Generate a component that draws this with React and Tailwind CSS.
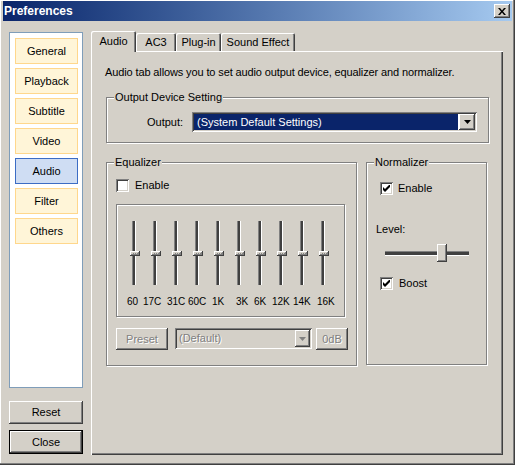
import React from "react";

const raised =
  "shadow-[inset_-1px_-1px_0_#404040,inset_1px_1px_0_#fff,inset_-2px_-2px_0_#808080,inset_2px_2px_0_#d4d0c8]";
const sunken =
  "shadow-[inset_1px_1px_0_#808080,inset_-1px_-1px_0_#fff,inset_2px_2px_0_#404040,inset_-2px_-2px_0_#d4d0c8]";
const etched = "border border-[#808080] shadow-[1px_1px_0_#fff,inset_1px_1px_0_#fff]";
const disabledText = "text-[#808080] [text-shadow:1px_1px_0_#fff]";

const Arrow = ({ color = "#000" }) => (
  <svg width="7" height="4" viewBox="0 0 7 4">
    <path d="M0 0h7L3.5 4z" fill={color} />
  </svg>
);

const Checkbox = ({ checked, label, gap }) => (
  <div className="flex items-center h-[13px]">
    <div className={`w-[13px] h-[13px] bg-white flex items-center justify-center ${sunken}`}>
      {checked && (
        <svg width="7" height="7" viewBox="0 0 7 7">
          <path d="M0 2v3l2 2 5-5V-1L2 4z" fill="#000" />
        </svg>
      )}
    </div>
    <span className={gap}>{label}</span>
  </div>
);

const GroupBox = ({ label, className, children }) => (
  <div className={`relative ${etched} ${className}`}>
    <span className="absolute left-[7px] -top-[7px] px-[1px] leading-[13px] bg-[#d4d0c8]">{label}</span>
    {children}
  </div>
);

const VSlider = () => (
  <div className="relative w-[21px] h-[64px]">
    <div className="w-[3px] h-full bg-[#404040] border-l border-[#808080] shadow-[1px_0_0_#fff]" />
    <div className={`absolute -left-[2px] top-[30px] w-[10px] h-[5px] bg-[#d4d0c8] ${raised} flex items-center justify-center`}>
      <div className="w-[5px] border-t border-dotted border-[#808080]" />
    </div>
  </div>
);

const navItems = ["General", "Playback", "Subtitle", "Video", "Audio", "Filter", "Others"];

export default function App() {
  return (
    <div
      className={`w-[515px] h-[465px] bg-[#d4d0c8] flex flex-col px-[3px] pt-[1px] text-[11px] text-black font-['Liberation_Sans',Arial,sans-serif] overflow-hidden shadow-[inset_-1px_-1px_0_#404040,inset_-2px_-2px_0_#808080,inset_1px_1px_0_#fff]`}
    >
      {/* title bar */}
      <div className="h-[20px] flex items-center justify-between pl-[1px] pr-[2px] bg-gradient-to-r from-[#0a246a] to-[#a6caf0]">
        <span className="text-white font-bold text-[12px]">Preferences</span>
        <div className={`w-[16px] h-[14px] bg-[#d4d0c8] flex items-center justify-center ${raised}`}>
          <svg width="8" height="7" viewBox="0 0 8 7">
            <path d="M0 0h2l2 2.5L6 0h2L5 3.5 8 7H6L4 4.5 2 7H0l3-3.5z" fill="#000" />
          </svg>
        </div>
      </div>

      <div className="flex pl-[6px] pt-[10px]">
        {/* left nav */}
        <div className="flex flex-col w-[74px] mt-[1px]">
          <div className="h-[356px] w-[74px] border border-[#7f9db9] bg-white pt-[5px] pl-[5px] flex flex-col gap-[4px]">
            {navItems.map((item) => (
              <div
                key={item}
                className={`w-[63px] h-[26px] flex items-center justify-center border ${
                  item === "Audio" ? "bg-[#cfddf3] border-[#3c6cc4]" : "bg-[#fff5d8] border-[#ffd78c]"
                }`}
              >
                {item}
              </div>
            ))}
          </div>
          <div className={`mt-[13px] h-[23px] flex items-center justify-center ${raised}`}>Reset</div>
          <div className="mt-[6px] h-[24px] border border-black">
            <div className={`h-full flex items-center justify-center ${raised}`}>Close</div>
          </div>
        </div>

        {/* tab control */}
        <div className="ml-[8px] w-[412px] flex flex-col">
          <div className="h-[20px] flex items-end">
            <div className="relative z-10 -mb-[1px] w-[45px] h-[21px] bg-[#d4d0c8] flex items-center justify-center pb-[1px] rounded-t-[2px] shadow-[inset_1px_1px_0_#fff,inset_-1px_0_0_#404040,inset_-2px_0_0_#808080]">
              Audio
            </div>
            <div className="w-[40px] h-[18px] flex items-center justify-center rounded-t-[2px] shadow-[inset_1px_1px_0_#fff,inset_-1px_0_0_#404040,inset_-2px_0_0_#808080]">
              AC3
            </div>
            <div className="w-[45px] h-[18px] flex items-center justify-center rounded-t-[2px] shadow-[inset_1px_1px_0_#fff,inset_-1px_0_0_#404040,inset_-2px_0_0_#808080]">
              Plug-in
            </div>
            <div className="w-[74px] h-[18px] flex items-center justify-center rounded-t-[2px] shadow-[inset_1px_1px_0_#fff,inset_-1px_0_0_#404040,inset_-2px_0_0_#808080]">
              Sound Effect
            </div>
          </div>

          <div className="h-[404px] pl-[14px] pt-[14px] flex flex-col shadow-[inset_1px_1px_0_#fff,inset_-1px_-1px_0_#404040,inset_-2px_-2px_0_#808080]">
            <p className="leading-[14px] tracking-[-0.12px]">
              Audio tab allows you to set audio output device, equalizer and normalizer.
            </p>

            <GroupBox label="Output Device Setting" className="mt-[18px] ml-[1px] w-[383px] h-[46px]">
              <div className="flex items-center pt-[14px] pl-[40px]">
                <span className="w-[45px]">Output:</span>
                <div className={`w-[285px] h-[20px] bg-white p-[2px] flex ${sunken}`}>
                  <div className="flex-1 bg-[#0a246a] text-white flex items-center pl-[3px] mr-[1px]">
                    (System Default Settings)
                  </div>
                  <div className={`w-[16px] h-[16px] bg-[#d4d0c8] flex items-center justify-center ${raised}`}>
                    <Arrow />
                  </div>
                </div>
              </div>
            </GroupBox>

            <div className="flex gap-[9px] mt-[19px] ml-[1px]">
              <GroupBox label="Equalizer" className="w-[251px] h-[204px]">
                <div className="pl-[9px] pt-[16px] flex flex-col">
                  <Checkbox checked={false} label="Enable" gap="ml-[6px]" />
                  <div className={`mt-[12px] w-[229px] h-[113px] ${etched} flex flex-col`}>
                    <div className="flex pt-[16px] pl-[15px]">
                      {Array.from({ length: 10 }).map((_, i) => (
                        <VSlider key={i} />
                      ))}
                    </div>
                    <div className="flex mt-[10px] leading-[13px] text-[10px] whitespace-nowrap">
                      <span className="ml-[10px] w-[16px]">60</span>
                      <span className="w-[24px]">17C</span>
                      <span className="w-[21px]">31C</span>
                      <span className="w-[24px]">60C</span>
                      <span className="w-[24px]">1K</span>
                      <span className="w-[18px]">3K</span>
                      <span className="w-[18px]">6K</span>
                      <span className="w-[21px]">12K</span>
                      <span className="w-[24px]">14K</span>
                      <span className="w-[24px]">16K</span>
                    </div>
                  </div>
                  <div className="flex mt-[11px] items-start">
                    <div className={`w-[52px] h-[22px] flex items-center justify-center ${raised} ${disabledText}`}>
                      Preset
                    </div>
                    <div className={`ml-[7px] w-[137px] h-[21px] p-[2px] flex ${sunken}`}>
                      <div className={`flex-1 flex items-center pl-[2px] ${disabledText}`}>(Default)</div>
                      <div className={`w-[15px] h-[17px] flex items-center justify-center ${raised}`}>
                        <Arrow color="#808080" />
                      </div>
                    </div>
                    <div className={`ml-[4px] w-[32px] h-[22px] flex items-center justify-center ${raised} ${disabledText}`}>
                      0dB
                    </div>
                  </div>
                </div>
              </GroupBox>

              <GroupBox label="Normalizer" className="w-[121px] h-[203px]">
                <div className="flex flex-col pt-[19px]">
                  <div className="pl-[13px]">
                    <Checkbox checked label="Enable" gap="ml-[5px]" />
                  </div>
                  <span className="pl-[9px] mt-[28px] leading-[13px]">Level:</span>
                  <div className="relative ml-[18px] mt-[8px] w-[84px] h-[18px] flex items-center">
                    <div className="w-full h-[4px] bg-[#404040] border-t border-[#808080] shadow-[0_1px_0_#fff]" />
                    <div className={`absolute left-[52px] top-0 w-[10px] h-[18px] bg-[#d4d0c8] ${raised}`} />
                  </div>
                  <div className="pl-[13px] mt-[15px]">
                    <Checkbox checked label="Boost" gap="ml-[6px]" />
                  </div>
                </div>
              </GroupBox>
            </div>
          </div>
        </div>
      </div>
    </div>
  );
}
